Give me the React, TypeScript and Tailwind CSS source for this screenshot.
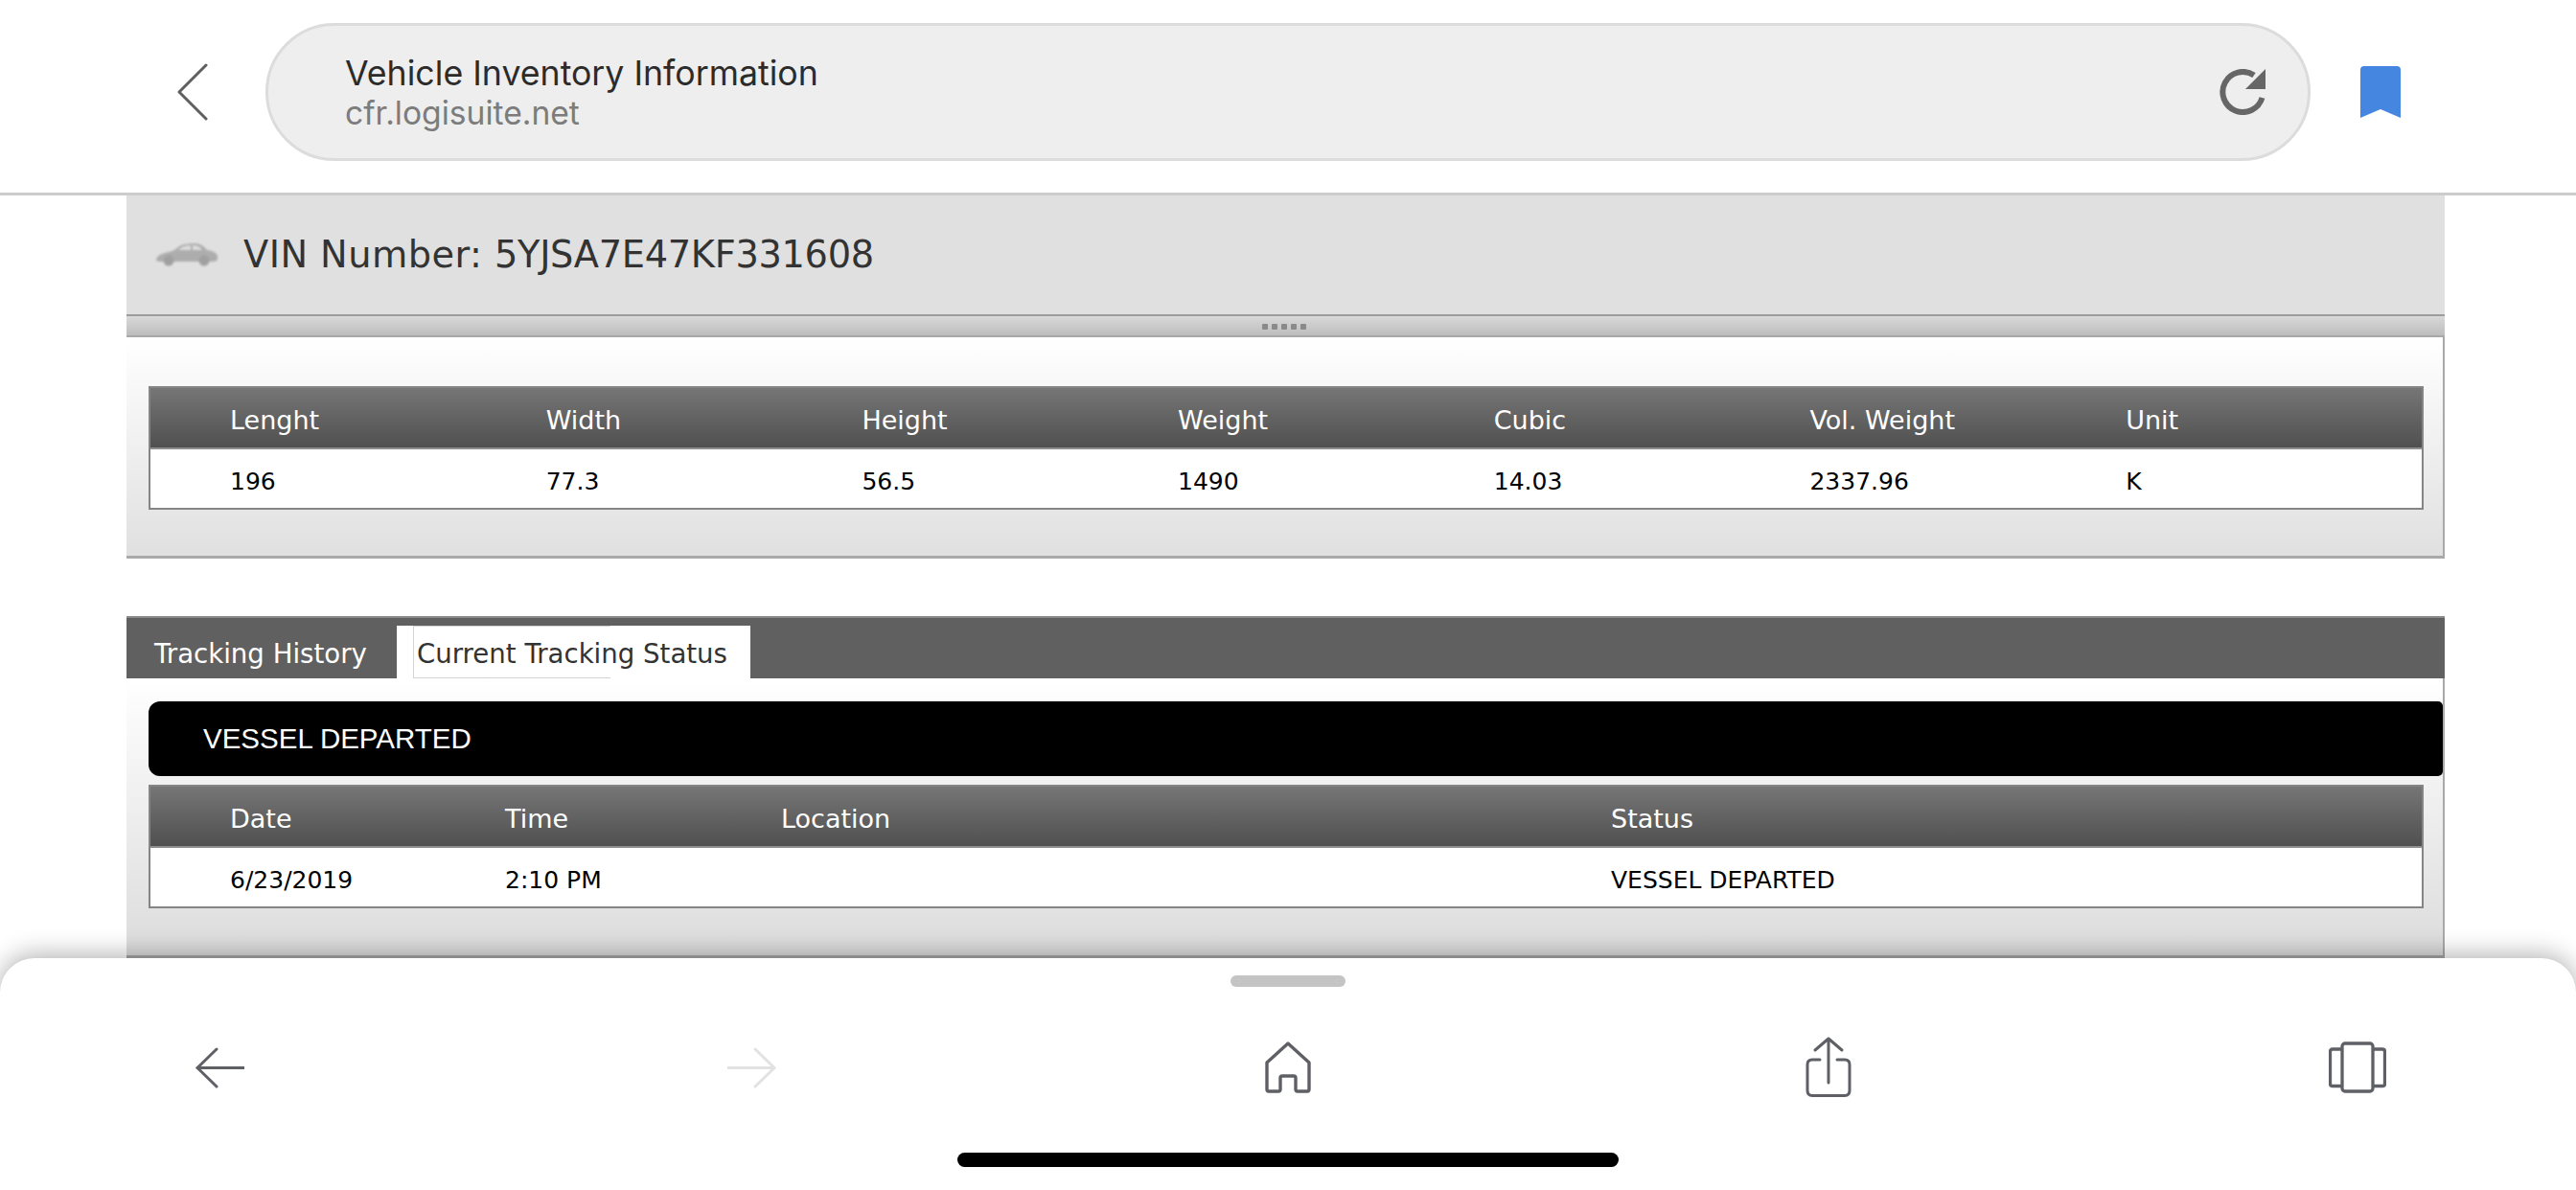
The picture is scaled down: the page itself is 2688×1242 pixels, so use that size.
const verdana = 'font-["DejaVu_Sans",sans-serif]';

const dimCols = ['Lenght', 'Width', 'Height', 'Weight', 'Cubic', 'Vol. Weight', 'Unit'];
const dimRow = ['196', '77.3', '56.5', '1490', '14.03', '2337.96', 'K'];
const trackCols = ['Date', 'Time', 'Location', 'Status'];
const trackRow = ['6/23/2019', '2:10 PM', '', 'VESSEL DEPARTED'];

function DataTable({ cols, row, template }: { cols: string[]; row: string[]; template: string }) {
  return (
    <div className={`border-2 border-[#858585] ${verdana}`}>
      <div className={`grid ${template} h-[64px] items-center border-b-2 border-[#8f8f8f] bg-gradient-to-b from-[#767676] to-[#505050] pt-[6px] text-[27px] text-white`}>
        <div />
        {cols.map(c => (
          <div key={c} className="pl-[18px]">{c}</div>
        ))}
      </div>
      <div className={`grid ${template} h-[61px] items-center bg-white pt-[6px] text-[25px] text-black`}>
        <div />
        {row.map((c, i) => (
          <div key={i} className="pl-[18px]">{c}</div>
        ))}
      </div>
    </div>
  );
}

function TopBar() {
  return (
    <header className="flex h-[204px] shrink-0 items-start border-b-[3px] border-[#cccccc] bg-white">
      <div className="flex h-[201px] w-[277px] items-center pl-[185px]">
        <svg width="32" height="60" viewBox="0 0 32 60" className="mt-[-9px]" fill="none" stroke="#5f5f5f" strokeWidth="3" strokeLinecap="round" strokeLinejoin="round">
          <path d="M30 2 L2 30 L30 58" />
        </svg>
      </div>
      <div className="mt-[24px] flex h-[144px] w-[2134px] items-center justify-between rounded-[72px] border-[3px] border-[#dcdcdc] bg-[#eeeeee] pl-[80px] pr-[44px]">
        <div className="font-['Inter',sans-serif]">
          <div className="text-[35.7px] leading-[44px] text-[#2b2b2b]">Vehicle Inventory Information</div>
          <div className="text-[33.6px] leading-[40px] text-[#7c7c7c]">cfr.logisuite.net</div>
        </div>
        <svg width="48" height="48" viewBox="0 0 48 48" fill="none">
          <path d="M44.5 30 A21 21 0 1 1 36 6.5" stroke="#666666" strokeWidth="6" />
          <path d="M48 0 V21 H27 Z" fill="#666666" />
        </svg>
      </div>
      <div className="ml-[52px] mt-[69px]">
        <svg width="42" height="54" viewBox="0 0 42 54">
          <path d="M0 4 Q0 0 4 0 H38 Q42 0 42 4 V54 L21 45 L0 54 Z" fill="#4587e0" />
        </svg>
      </div>
    </header>
  );
}

function VinPanel() {
  return (
    <div className="flex h-[124px] items-center bg-[#e0e0e0] pl-[30px]">
      <svg width="66" height="26" viewBox="0 0 66 26" className="blur-[1px]">
        <path d="M1 17 Q3 12 14 10 Q20 9 25 4 Q30 1 42 1 Q50 2 54 8 Q63 9 65 14 Q66 19 62 20 H4 Q1 20 1 17 Z" fill="#adadad" />
        <path d="M28 5 Q32 3 37 3 V8 H24 Z M39 3 Q46 3 49 8 H39 Z" fill="#dcdcdc" />
        <circle cx="14" cy="19" r="5.5" fill="#a0a0a0" />
        <circle cx="51" cy="19" r="5.5" fill="#a0a0a0" />
      </svg>
      <div className={`ml-[26px] text-[38.3px] text-[#333333] ${verdana}`}>
        <span className="tracking-[0.45px]">VIN Number: </span>
        <span className="tracking-[-0.3px]">5YJSA7E47KF331608</span>
      </div>
    </div>
  );
}

function Splitter() {
  return (
    <div className="flex h-[24px] items-center justify-center border-y-2 border-t-[#9c9c9c] border-b-[#a8a8a8] bg-gradient-to-b from-[#d9d9d9] to-[#bdbdbd]">
      <div className="flex gap-[4px] pr-[3px] pt-[1px]">
        {[0, 1, 2, 3, 4].map(i => (
          <span key={i} className="h-[6px] w-[6px] rounded-[1px] bg-[#8a8a8a] blur-[0.5px]" />
        ))}
      </div>
    </div>
  );
}

function BottomIcons() {
  return (
    <div className="mt-[51px] flex h-[66px] items-center pl-[203px]">
      <svg width="52" height="43" viewBox="0 0 52 43" fill="none" stroke="#5e6066" strokeWidth="3" strokeLinecap="round" strokeLinejoin="round">
        <path d="M23 2 L3 21.5 L23 41" />
        <path d="M3 21.5 H52" />
      </svg>
      <svg width="52" height="43" viewBox="0 0 52 43" fill="none" stroke="#e2e2e2" strokeWidth="3" strokeLinecap="round" strokeLinejoin="round" className="ml-[504px]">
        <path d="M29 2 L49 21.5 L29 41" />
        <path d="M49 21.5 H0" />
      </svg>
      <svg width="48" height="54" viewBox="0 0 48 54" fill="none" stroke="#5e6066" strokeWidth="3.4" strokeLinejoin="round" className="ml-[509px]">
        <path d="M24 2 L2 22 V50 Q2 52 4 52 H14 Q16 52 16 50 V38 Q16 36 18 36 H30 Q32 36 32 38 V50 Q32 52 34 52 H44 Q46 52 46 50 V22 Z" />
      </svg>
      <svg width="48" height="64" viewBox="0 0 48 64" fill="none" stroke="#5e6066" strokeWidth="3" strokeLinecap="round" strokeLinejoin="round" className="ml-[516px]">
        <path d="M15 24 H7 Q2 24 2 29 V56 Q2 61.5 7 61.5 H41 Q46 61.5 46 56 V29 Q46 24 41 24 H33" />
        <path d="M24 48 V2 M10 14 L24 2 L38 14" />
      </svg>
      <svg width="60" height="54" viewBox="0 0 60 54" fill="none" stroke="#5e6066" strokeWidth="3.3" strokeLinejoin="round" className="ml-[498px]">
        <rect x="14" y="2" width="32" height="50" rx="3" />
        <path d="M14 8 H4 Q1.5 8 1.5 10.5 V44 Q1.5 46.5 4 46.5 H14 M46 8 H56 Q58.5 8 58.5 10.5 V44 Q58.5 46.5 56 46.5 H46" />
      </svg>
    </div>
  );
}

export default function App() {
  return (
    <div className="relative flex h-[1242px] w-[2688px] flex-col overflow-hidden bg-white">
      <TopBar />

      <main className="ml-[132px] mr-[137px] flex flex-col">
        <VinPanel />
        <Splitter />
        <section className="flex h-[231px] flex-col border-b-[3px] border-r-2 border-[#a9a9a9] bg-gradient-to-b from-white to-[#e0e0e0] pl-[23px] pr-[20px] pt-[51px]">
          <DataTable cols={dimCols} row={dimRow} template="grid-cols-[65px_repeat(7,329.7px)]" />
        </section>

        <section className={`mt-[60px] flex h-[65px] items-end border-t-2 border-[#8a8a8a] bg-[#606060] text-[27.6px] ${verdana}`}>
          <div className="flex h-[55px] w-[282px] items-center pl-[29px] pt-[4px] text-white">Tracking History</div>
          <div className="relative flex h-[55px] w-[369px] items-center bg-white pl-[21px] pt-[4px] text-[#333333]">
            <div className="absolute inset-y-0 left-[17px] w-[206px] border-y border-l border-[#d4d4d4]" />
            <span className="relative">Current Tracking Status</span>
          </div>
        </section>
        <section className="flex h-[292px] flex-col border-b-[3px] border-r-2 border-[#a9a9a9] bg-gradient-to-b from-white to-[#dcdcdc] pl-[23px] pt-[24px]">
          <div className="flex h-[78px] items-center rounded-l-[12px] rounded-r-[5px] bg-black pl-[57px] font-['Liberation_Sans',sans-serif] text-[29.5px] text-white">
            VESSEL DEPARTED
          </div>
          <div className="mr-[20px] mt-[9px]">
            <DataTable cols={trackCols} row={trackRow} template="grid-cols-[65px_287px_288px_866px_1fr]" />
          </div>
        </section>
      </main>

      <div className="absolute inset-x-0 bottom-0 h-[242px] rounded-t-[36px] bg-white shadow-[0_-4px_26px_rgba(0,0,0,0.3)]">
        <div className="mx-auto mt-[18px] h-[12px] w-[120px] rounded-full bg-[#c4c4c4]" />
        <BottomIcons />
        <div className="absolute bottom-[24px] left-[999px] h-[15px] w-[690px] rounded-full bg-black" />
      </div>
    </div>
  );
}
